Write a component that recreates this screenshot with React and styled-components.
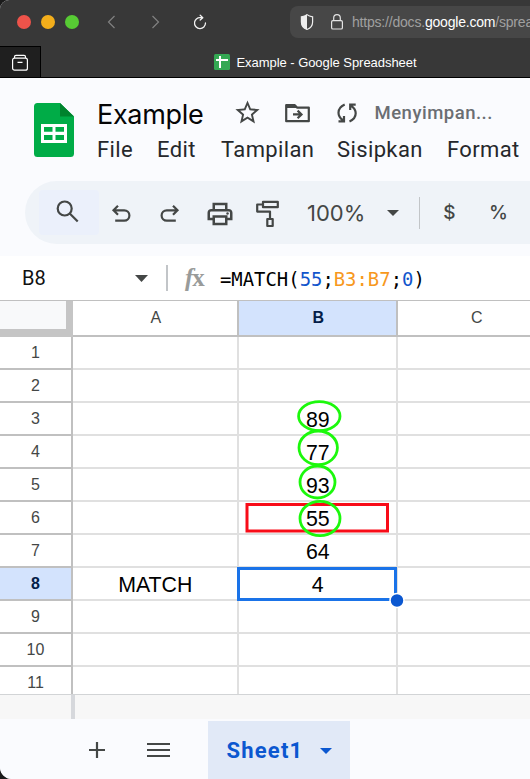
import React from "react";
import styled, { createGlobalStyle } from "styled-components";
import { MdStarBorder, MdOutlinePrint } from "react-icons/md";

const GlobalStyle = createGlobalStyle`
  * { box-sizing: border-box; }
  body { margin: 0; background: #1b1b1b; overflow: hidden; }
`;

const Window = styled.main`
  width: 530px;
  height: 779px;
  overflow: hidden;
  display: flex;
  flex-direction: column;
  border-radius: 9px 0 0 12px;
  background: #fafbfe;
  font-family: "Liberation Sans", Arial, sans-serif;
  svg { display: block; flex: none; }
`;

/* Browser chrome */
const BrowserBar = styled.header`
  height: 46px;
  flex: none;
  display: flex;
  align-items: flex-start;
  background: #383838;
`;
const TrafficLights = styled.div`
  display: flex;
  gap: 10px;
  padding: 15px 0 0 17px;
  width: 106px;
`;
const Light = styled.i`
  width: 14px;
  height: 14px;
  border-radius: 50%;
  background: ${(p) => p.$color};
`;
const NavIcons = styled.div`
  display: flex;
  width: 184px;
  padding-top: 12px;
  gap: 24px;
`;
const AddressField = styled.div`
  flex: 1;
  min-width: 0;
  height: 32px;
  margin-top: 6px;
  padding-left: 9px;
  display: flex;
  align-items: center;
  overflow: hidden;
  border-radius: 8px 0 0 8px;
  background: #474747;
`;
const LockIcon = styled.svg`
  margin-left: 15px;
`;
const Url = styled.span`
  margin-left: 8px;
  white-space: nowrap;
  font-size: 14px;
  letter-spacing: -0.2px;
  color: #a0a0a0;
  b { font-weight: 400; color: #fff; }
`;
const TabBar = styled.div`
  height: 32px;
  flex: none;
  display: flex;
  background: #383838;
  border-bottom: 1px solid #000;
`;
const PinnedTab = styled.div`
  width: 41px;
  height: 31px;
  padding: 7px 0 0 11px;
  background: #1f1f1f;
  border: solid #000;
  border-width: 1px 1px 0 0;
`;
const ActiveTab = styled.div`
  flex: 1;
  display: flex;
  align-items: center;
  padding: 1px 0 0 173px;
  gap: 6.5px;
  font-size: 13px;
  letter-spacing: -0.05px;
  color: #fff;
`;

/* Document header */
const DocHeader = styled.section`
  height: 103px;
  flex: none;
  display: flex;
  padding: 25px 0 0 34px;
`;
const DocInfo = styled.div`
  margin-left: 23px;
  flex: 1;
  min-width: 0;
`;
const TitleRow = styled.div`
  display: flex;
  align-items: center;
  height: 24px;
`;
const Title = styled.h1`
  margin: 0;
  width: 135.5px;
  font: 400 27px/30px Inter, sans-serif;
  letter-spacing: -0.3px;
  color: #050505;
`;
const TitleActions = styled.div`
  display: flex;
  align-items: center;
  height: 24px;
  margin-bottom: 5px;
`;
const FolderIcon = styled.svg`
  margin-left: 23px;
`;
const SyncIcon = styled.svg`
  margin-left: 27.5px;
`;
const Status = styled.span`
  margin-left: 17.5px;
  font: 500 18.5px/24px Roboto, sans-serif;
  letter-spacing: 0.5px;
  color: #6a6e73;
`;
const MenuRow = styled.nav`
  display: flex;
  height: 30px;
  margin-top: 8px;
  font: 400 22px/30px Roboto, sans-serif;
  color: #26282b;
`;
const MenuItem = styled.span`
  flex: none;
  width: ${(p) => p.$width}px;
  letter-spacing: 0.38px;
  white-space: nowrap;
`;

/* Toolbar */
const Toolbar = styled.section`
  height: 63px;
  flex: none;
  margin: 0 0 12px 25px;
  padding-left: 14px;
  display: flex;
  align-items: center;
  border-radius: 32px 0 0 32px;
  background: #eff3f8;
  color: #444746;
`;
const SearchButton = styled.div`
  width: 60px;
  height: 45px;
  padding: 9px 0 0 17px;
  border-radius: 4px;
  background: #ebf0fb;
`;
const ToolIcon = styled.div`
  width: ${(p) => p.$width}px;
  padding-top: 3px;
  display: flex;
  justify-content: center;
`;
const Zoom = styled.span`
  margin-left: 16px;
  width: 80px;
  font: 400 22px/26px Inter, sans-serif;
`;
const Divider = styled.i`
  width: ${(p) => p.$width || 1}px;
  height: ${(p) => p.$height}px;
  margin-left: ${(p) => p.$gap}px;
  flex: none;
  background: #c2c5c8;
`;
const FormatSigns = styled.div`
  display: flex;
  margin-left: 5px;
`;
const FormatSign = styled.span`
  width: 49px;
  text-align: center;
  font: 500 19px/24px Inter, sans-serif;
`;

/* Formula bar */
const FormulaBar = styled.section`
  height: 45px;
  flex: none;
  display: flex;
  align-items: center;
  background: #fff;
  border-bottom: 1px solid #c0c0c0;
  color: #444746;
`;
const NameBox = styled.span`
  width: 113px;
  margin-left: 22px;
  font: 400 20px/24px Roboto, sans-serif;
  color: #111;
`;
const Fx = styled.span`
  width: 37px;
  padding-left: 17px;
  white-space: nowrap;
  font: italic 700 25px/24px "Liberation Serif", serif;
  letter-spacing: -1px;
  color: #999b9a;
  b { font-style: normal; }
`;
const Formula = styled.code`
  margin: 2px 0 0 15px;
  white-space: nowrap;
  font: 400 18.9px/24px "DejaVu Sans Mono", monospace;
  color: #000;
`;
const Token = styled.span`
  color: ${(p) => p.$color};
`;

/* Grid */
const Grid = styled.section`
  position: relative;
  height: 394px;
  flex: none;
  overflow: hidden;
  background: #fff;
  border-bottom: 1px solid #d2d4d6;
`;
const GridRow = styled.div`
  display: grid;
  grid-template-columns: 73px 166px 159px 158px;
  grid-template-rows: 100%;
  height: ${(p) => p.$height || 33}px;
`;
const Corner = styled.div`
  background: #f8f9fa;
  border: solid #c5c5c5;
  border-width: 0 7px 8px 0;
`;
const HeaderCell = styled.div`
  display: flex;
  align-items: center;
  justify-content: center;
  padding: ${(p) => (p.$column ? "0 0 1px 1.5px" : "0")};
  border: solid #c0c0c0;
  border-width: 0 2px 2px 0;
  font-size: 16px;
  line-height: 18px;
  font-weight: ${(p) => (p.$active ? 700 : 400)};
  color: ${(p) => (p.$active ? "#041e49" : "#444746")};
  background: ${(p) => (p.$active ? "#d3e3fd" : "#fff")};
`;
const Cell = styled.div`
  display: flex;
  align-items: center;
  justify-content: center;
  padding: 4px 0 0 0.5px;
  border: solid #e0e0e0;
  border-width: 0 2px 2px 0;
  font-size: 21.33px;
  line-height: 25px;
  color: #000;
`;
const Marks = styled.svg`
  position: absolute;
  inset: 0;
  pointer-events: none;
`;

/* Footer */
const ScrollTrack = styled.div`
  height: 24px;
  flex: none;
  padding-left: 71px;
  display: flex;
  background: #f7f7f7;
`;
const TrackHandle = styled.i`
  width: 4px;
  background: #d6d8dc;
`;
const SheetBar = styled.footer`
  height: 60px;
  flex: none;
  padding: 2px 0 0 89px;
  display: flex;
  align-items: center;
  background: #fafbfe;
`;
const ListIcon = styled.svg`
  margin-left: 42px;
`;
const SheetTab = styled.div`
  width: 142px;
  height: 58px;
  margin-left: 38px;
  padding: 1px 0 0 18.5px;
  display: flex;
  align-items: center;
  background: #e1e9f7;
  color: #0b57d0;
`;
const SheetName = styled.span`
  width: 93px;
  font: 700 22px/26px Roboto, sans-serif;
  letter-spacing: 1.2px;
`;

const Caret = ({ width = 13, height = 7 }) => (
  <svg width={width} height={height} viewBox="0 0 12 6" preserveAspectRatio="none" fill="currentColor">
    <path d="M0 0h12L6 6z" />
  </svg>
);

const rows = [
  [1], [2], [3, "", "89"], [4, "", "77"], [5, "", "93"], [6, "", "55"],
  [7, "", "64"], [8, "MATCH", "4"], [9], [10], [11],
];

const menu = [["File", 60], ["Edit", 64], ["Tampilan", 116], ["Sisipkan", 110], ["Format", 80]];

export default function App() {
  return (
    <Window>
      <GlobalStyle />
      <BrowserBar>
        <TrafficLights>
          <Light $color="#ee534a" />
          <Light $color="#f3ae1b" />
          <Light $color="#57cb34" />
        </TrafficLights>
        <NavIcons>
          <svg width="20" height="20" fill="none" stroke="#818181" strokeWidth="1.2"><path d="M8.5 4 2.5 10l6 6" /></svg>
          <svg width="20" height="20" fill="none" stroke="#818181" strokeWidth="1.2"><path d="M2.5 4 8.5 10l-6 6" /></svg>
          <svg width="20" height="20" fill="none" stroke="#f2f2f2" strokeWidth="1.3" strokeLinecap="round" strokeLinejoin="round">
            <path d="M6.5 5.6A5.5 5.5 0 1 0 11.5 11M6 5.7h2.7M6.2 3.2 8.8 5.7 6.2 8.1" />
          </svg>
        </NavIcons>
        <AddressField>
          <svg width="16" height="18" viewBox="0 0 16 18">
            <path d="M8 1.6C9.6 3 11.7 3.6 13.6 3.8V9c0 3.6-2.3 6.3-5.6 7.5C4.7 15.3 2.4 12.6 2.4 9V3.8C4.3 3.6 6.4 3 8 1.6z" fill="none" stroke="#eee" strokeWidth="1.2" />
            <path d="M8 1.6C6.4 3 4.3 3.6 2.4 3.8V9c0 3.6 2.3 6.3 5.6 7.5z" fill="#eee" />
          </svg>
          <LockIcon width="14" height="18" viewBox="0 0 14 18" fill="none" stroke="#e4e4e4" strokeWidth="1.2">
            <rect x="1.6" y="7.6" width="10.8" height="8.4" rx="1.3" />
            <path d="M3.7 7.5V5a3.3 3.3 0 0 1 6.6 0v2.5" />
          </LockIcon>
          <Url>https://docs.<b>google.com</b>/sprea</Url>
        </AddressField>
      </BrowserBar>
      <TabBar>
        <PinnedTab>
          <svg width="18" height="18" fill="none" stroke="#fff" strokeWidth="1.2">
            <rect x="1.6" y="4.2" width="14.8" height="12" rx="2" />
            <path d="M3.5 4V2.8Q3.5 1.4 5 1.4h8q1.5 0 1.5 1.4V4M6.5 8.3h5" />
          </svg>
        </PinnedTab>
        <ActiveTab>
          <svg width="16" height="16">
            <rect width="16" height="16" rx="1.5" fill="#34a853" />
            <path d="M2 6h12M6 2v12" stroke="#fff" strokeWidth="2" />
          </svg>
          <span>Example - Google Spreadsheet</span>
        </ActiveTab>
      </TabBar>

      <DocHeader>
        <svg width="40" height="54">
          <path d="M3.5 0H26l14 13.5v37a3.5 3.5 0 0 1-3.5 3.5h-33A3.5 3.5 0 0 1 0 50.5v-47A3.5 3.5 0 0 1 3.5 0z" fill="#00ac47" />
          <path d="M26 0l14 13.5H26z" fill="#00832d" />
          <path fillRule="evenodd" fill="#fff" d="M7 21h26v19H7zM10 24v4.7h8.5V24zm11.5 0v4.7H30V24zM10 32v5h8.5v-5zm11.5 0v5H30v-5z" />
        </svg>
        <DocInfo>
          <TitleRow>
            <Title>Example</Title>
            <TitleActions>
              <MdStarBorder size={29} color="#444746" />
              <FolderIcon width="25" height="20" fill="none" stroke="#444746" strokeWidth="2.2" strokeLinejoin="round">
                <path d="M1.2 2.2V18.2h22.6V4.6H12L9.8 2.2z" />
                <path d="M1.2 1.5h8.6l2.8 3.6H1.2z" fill="#444746" stroke="none" />
                <path d="M8 11.4h8M12.6 7.6l3.9 3.8-3.9 3.8" strokeLinejoin="miter" />
              </FolderIcon>
              <SyncIcon width="20" height="20" fill="none" stroke="#444746" strokeWidth="2.2">
                <path d="M7.7 1.5Q1.5 4.3 1.5 9.7 1.5 14.2 6 17.2M1.5 18.3H7v-5.3M12.5 18.5Q18.7 15.7 18.7 10.3 18.7 5.8 14.2 2.8M18.7 1.7H13.2v5.3" />
              </SyncIcon>
              <Status>Menyimpan...</Status>
            </TitleActions>
          </TitleRow>
          <MenuRow>
            {menu.map(([label, width]) => (
              <MenuItem key={label} $width={width}>{label}</MenuItem>
            ))}
          </MenuRow>
        </DocInfo>
      </DocHeader>

      <Toolbar>
        <SearchButton>
          <svg width="26" height="26" fill="none" stroke="#444746" strokeWidth="2.2">
            <circle cx="8.7" cy="9.5" r="7" /><path d="M13.7 14.5l8 8" />
          </svg>
        </SearchButton>
        <ToolIcon $width={44}>
          <svg width="20" height="20" fill="none" stroke="#444746" strokeWidth="2.2">
            <path d="M7 1.8 2.5 6.3 7 10.8M2.5 6.3h10.7a5.2 5.2 0 0 1 0 10.4H4.2" />
          </svg>
        </ToolIcon>
        <ToolIcon $width={54}>
          <svg width="20" height="20" fill="none" stroke="#444746" strokeWidth="2.2">
            <path d="M13 1.8 17.5 6.3 13 10.8M17.5 6.3H6.8a5.2 5.2 0 0 0 0 10.4H15.8" />
          </svg>
        </ToolIcon>
        <ToolIcon $width={46}><MdOutlinePrint size={30} /></ToolIcon>
        <ToolIcon $width={48}>
          <svg width="24" height="30" fill="none" stroke="#444746" strokeWidth="2.2" strokeLinejoin="round">
            <rect x="8" y="2.8" width="14.8" height="5.4" />
            <path d="M7.5 5.5H2.2V12.6H15V20" />
            <rect x="12.3" y="20" width="5.4" height="7" />
          </svg>
        </ToolIcon>
        <Zoom>100%</Zoom>
        <Caret width={12} height={6} />
        <Divider $height={32} $gap={20} />
        <FormatSigns>
          <FormatSign>$</FormatSign>
          <FormatSign>%</FormatSign>
        </FormatSigns>
      </Toolbar>

      <FormulaBar>
        <NameBox>B8</NameBox>
        <Caret />
        <Divider $width={2} $height={26} $gap={18} />
        <Fx>f<b>x</b></Fx>
        <Formula>
          =MATCH(<Token $color="#1155cc">55</Token>;<Token $color="#f7981d">B3:B7</Token>;<Token $color="#1155cc">0</Token>)
        </Formula>
      </FormulaBar>

      <Grid>
        <GridRow $height={36}>
          <Corner />
          <HeaderCell $column>A</HeaderCell>
          <HeaderCell $column $active>B</HeaderCell>
          <HeaderCell $column>C</HeaderCell>
        </GridRow>
        {rows.map(([n, a, b]) => (
          <GridRow key={n}>
            <HeaderCell $active={n === 8}>{n}</HeaderCell>
            <Cell>{a}</Cell>
            <Cell>{b}</Cell>
            <Cell />
          </GridRow>
        ))}
        <Marks width="530" height="394" viewBox="0 301 530 394" fill="none">
          <rect x="238.5" y="568.5" width="157" height="31" stroke="#1a73e8" strokeWidth="3" />
          <circle cx="397" cy="600.5" r="7" fill="#0b57d0" stroke="#fff" strokeWidth="1.5" />
          <rect x="247" y="504.5" width="140.5" height="26.5" stroke="#f80c18" strokeWidth="3" />
          <g stroke="#1cf80c" strokeWidth="2.8">
            <ellipse cx="319.3" cy="416.2" rx="20.7" ry="14.5" />
            <ellipse cx="318.2" cy="447.8" rx="19.2" ry="16.8" />
            <ellipse cx="317.5" cy="482" rx="17.5" ry="16" />
            <ellipse cx="320" cy="518.5" rx="20" ry="17.2" />
          </g>
        </Marks>
      </Grid>

      <ScrollTrack><TrackHandle /></ScrollTrack>
      <SheetBar>
        <svg width="16" height="16" stroke="#444746" strokeWidth="2.2"><path d="M0 8h16M8 0v16" /></svg>
        <ListIcon width="23" height="16" stroke="#444746" strokeWidth="2.2"><path d="M0 2h23M0 8h23M0 14h23" /></ListIcon>
        <SheetTab>
          <SheetName>Sheet1</SheetName>
          <Caret width={12} height={6} />
        </SheetTab>
      </SheetBar>
    </Window>
  );
}
